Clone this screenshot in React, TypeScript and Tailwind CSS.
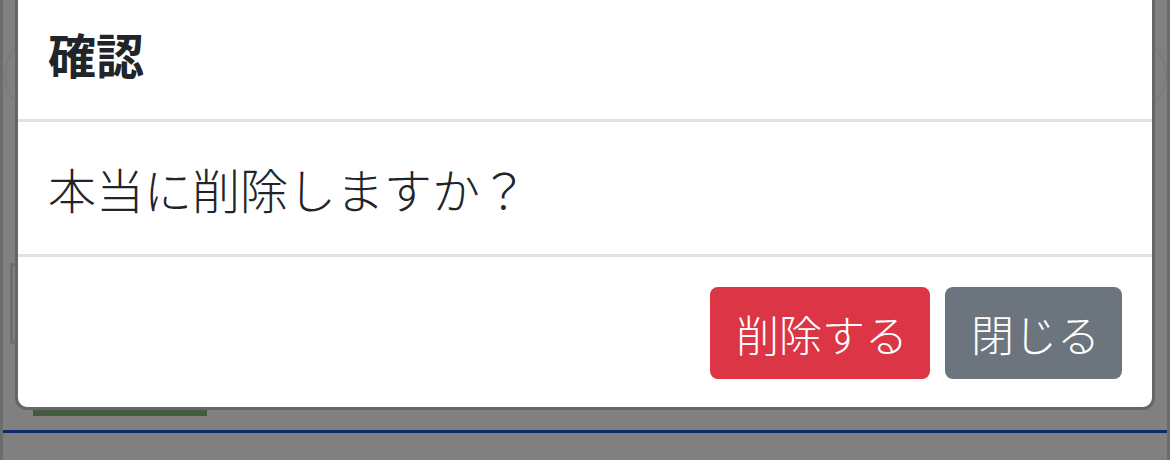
import React from 'react';

const jp = { fontFamily: '"Noto Sans CJK JP", "Noto Sans", sans-serif' };

const App: React.FC = () => {
  return (
    <div
      className="relative w-[1170px] h-[460px] overflow-hidden bg-[#808080] border-x-[3px] border-[#6c6c6c]"
      style={jp}
    >
      {/* page content under the backdrop */}
      <div className="absolute left-[1px] right-0 top-[35px] h-[80px] rounded-full border-2 border-[#7a7a7a]" />
      <div className="absolute left-[7px] top-[263px] w-[220px] h-[81px] border-[3px] border-[#6e6e6e]" />

      <div className="relative flex flex-col">
        {/* modal */}
        <div className="mx-[12px] -mt-[16px] rounded-[12px] border-[3px] border-[#666666] bg-white text-[#212529]">
          <div className="px-[30px] py-[30px] border-b-[3px] border-[#dee2e6]">
            <h5 className="text-[48px] leading-[72px] font-bold">確認</h5>
          </div>
          <div className="px-[30px] py-[30px] border-b-[3px] border-[#dee2e6]">
            <p className="text-[48px] leading-[72px] font-light">本当に削除しますか？</p>
          </div>
          <div className="flex justify-end gap-[15px] px-[30px] pt-[30px] pb-[28px]">
            <button className="h-[92px] pl-[26px] pr-[22px] rounded-[8px] bg-[#dc3545] text-white text-[43px] font-light leading-none flex items-center">
              削除する
            </button>
            <button className="h-[92px] pl-[26px] pr-[22px] rounded-[8px] bg-[#6c757d] text-white text-[43px] font-light leading-none flex items-center">
              閉じる
            </button>
          </div>
        </div>

        <div className="ml-[30px] w-[174px] h-[6px] bg-[#445b41]" />
        <div className="mt-[14px] h-[3px] bg-[#0d2a6b]" />
      </div>
    </div>
  );
};

export default App;
